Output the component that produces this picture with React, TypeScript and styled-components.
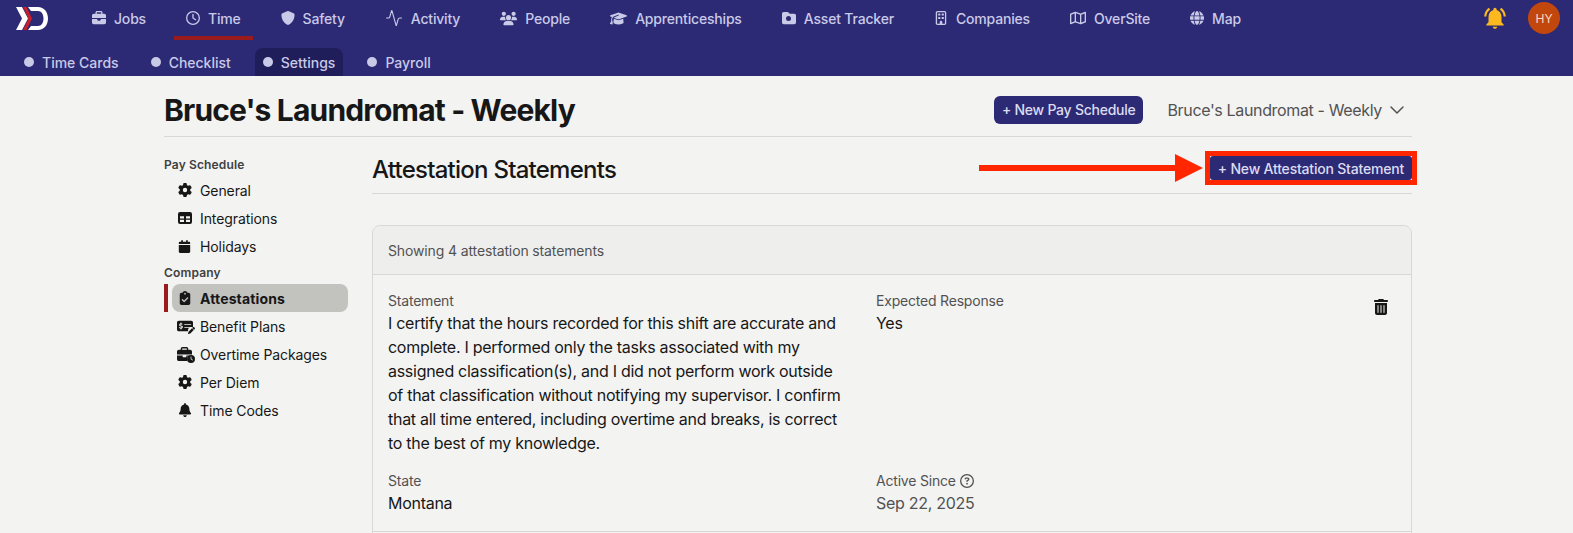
import React from "react";
import styled, { createGlobalStyle } from "styled-components";
import {
  FaBriefcase,
  FaClock,
  FaRegClock,
  FaShield,
  FaUsers,
  FaGraduationCap,
  FaFolder,
  FaRegBuilding,
  FaRegMap,
  FaGlobe,
  FaGear,
  FaCalendar,
  FaClipboardCheck,
  FaBell,
  FaTrashCan,
  FaMoneyCheckDollar,
  FaPen,
  FaRegCircleQuestion,
} from "react-icons/fa6";
import { MdNotificationsActive } from "react-icons/md";
import { Activity, ChevronDown } from "lucide-react";

const GlobalStyle = createGlobalStyle`
  html, body {
    margin: 0;
    height: 533px;
    overflow: hidden;
    background: #f3f3f2;
    font-family: Inter, "Liberation Sans", sans-serif;
    color: #171717;
  }
  * { box-sizing: border-box; }
`;

const navItems = [
  { label: "Jobs", icon: <FaBriefcase size={14} /> },
  { label: "Time", icon: <FaRegClock size={14} />, active: true },
  { label: "Safety", icon: <FaShield size={14} /> },
  { label: "Activity", icon: <Activity size={18} strokeWidth={1.5} /> },
  { label: "People", icon: <FaUsers size={17} /> },
  { label: "Apprenticeships", icon: <FaGraduationCap size={17} /> },
  { label: "Asset Tracker", icon: <FolderGear /> },
  { label: "Companies", icon: <FaRegBuilding size={14} /> },
  { label: "OverSite", icon: <FaRegMap size={16} /> },
  { label: "Map", icon: <FaGlobe size={14} /> },
];

const subTabs = ["Time Cards", "Checklist", "Settings", "Payroll"];

function FolderGear() {
  return (
    <IconStack>
      <FaFolder size={14} />
      <FolderDot />
    </IconStack>
  );
}

function TableIcon() {
  return (
    <svg width="14" height="12" viewBox="0 0 14 12">
      <path
        fillRule="evenodd"
        fill="currentColor"
        d="M2 0H12A2 2 0 0 1 14 2V10A2 2 0 0 1 12 12H2A2 2 0 0 1 0 10V2A2 2 0 0 1 2 0ZM2 4.2V6.4H6V4.2ZM8 4.2V6.4H12V4.2ZM2 7.7V10H6V7.7ZM8 7.7V10H12V7.7Z"
      />
    </svg>
  );
}

function BriefcaseClock() {
  return (
    <IconStack>
      <FaBriefcase size={15} />
      <IconBadge $right={-3} $bottom={-1}>
        <FaClock size={8} />
      </IconBadge>
    </IconStack>
  );
}

function CheckPen() {
  return (
    <IconStack>
      <FaMoneyCheckDollar size={16} />
      <IconBadge $right={-2} $bottom={0}>
        <FaPen size={7} />
      </IconBadge>
    </IconStack>
  );
}

const Logo = () => (
  <LogoSvg viewBox="0 0 32 23" width="32" height="23">
    <path d="M12 0H22C28 0 32 5 32 11.5C32 18 28 23 22 23H12L15 19H22C25.5 19 27.5 15.5 27.5 11.5C27.5 7.5 25.5 4 22 4H15Z" fill="#fff" />
    <path d="M0 0H6L12 11.5L6 23H0L6 11.5Z" fill="#fff" />
    <path d="M7 0H10.5L16 11.5L10.5 23H7L12.5 11.5Z" fill="#c8202b" />
  </LogoSvg>
);

const App: React.FC = () => {
  return (
    <>
      <GlobalStyle />
      <TopBar>
        <MainRow>
          <Logo />
          <NavList>
            {navItems.map((item) => (
              <NavItem key={item.label} $active={item.active}>
                {item.icon}
                {item.label}
              </NavItem>
            ))}
          </NavList>
          <TopEnd>
            <BellIcon>
              <MdNotificationsActive size={26} />
            </BellIcon>
            <Avatar>HY</Avatar>
          </TopEnd>
        </MainRow>
        <SubRow>
          {subTabs.map((tab) => (
            <SubTab key={tab} $active={tab === "Settings"}>
              <Dot />
              {tab}
            </SubTab>
          ))}
        </SubRow>
      </TopBar>
      <Content>
        <PageHeader>
          <PageTitle>Bruce's Laundromat - Weekly</PageTitle>
          <HeaderEnd>
            <PrimaryButton>+ New Pay Schedule</PrimaryButton>
            <ScheduleSelect>
              Bruce's Laundromat - Weekly
              <ChevronDown size={24} strokeWidth={1.5} />
            </ScheduleSelect>
          </HeaderEnd>
        </PageHeader>
        <Columns>
          <Sidebar>
            <SideLabel>Pay Schedule</SideLabel>
            <SideItem><SideIcon><FaGear size={14} /></SideIcon>General</SideItem>
            <SideItem><SideIcon><TableIcon /></SideIcon>Integrations</SideItem>
            <SideItem><SideIcon><FaCalendar size={13} /></SideIcon>Holidays</SideItem>
            <SideLabel>Company</SideLabel>
            <SideItem $active><SideIcon><FaClipboardCheck size={14} /></SideIcon>Attestations</SideItem>
            <SideItem><SideIcon><CheckPen /></SideIcon>Benefit Plans</SideItem>
            <SideItem><SideIcon><BriefcaseClock /></SideIcon>Overtime Packages</SideItem>
            <SideItem><SideIcon><FaGear size={14} /></SideIcon>Per Diem</SideItem>
            <SideItem><SideIcon><FaBell size={14} /></SideIcon>Time Codes</SideItem>
          </Sidebar>
          <Main>
            <SectionHeader>
              <SectionTitle>Attestation Statements</SectionTitle>
              <Arrow viewBox="0 0 224 28" width="224" height="28">
                <rect x="0" y="11" width="198" height="6" fill="#ff2600" />
                <polygon points="196,0 224,14 196,28" fill="#ff2600" />
              </Arrow>
              <Highlight>
                <SmallButton>+ New Attestation Statement</SmallButton>
              </Highlight>
            </SectionHeader>
            <Card>
              <CardHeader>Showing 4 attestation statements</CardHeader>
              <Statement>
                <Field>
                  <FieldLabel>Statement</FieldLabel>
                  <FieldValue>
                    I certify that the hours recorded for this shift are accurate and complete. I performed only the tasks associated with my assigned classification(s), and I did not perform work outside of that classification without notifying my supervisor. I confirm that all time entered, including overtime and breaks, is correct to the best of my knowledge.
                  </FieldValue>
                </Field>
                <Field>
                  <FieldLabel>Expected Response</FieldLabel>
                  <FieldValue>Yes</FieldValue>
                </Field>
                <DeleteIcon>
                  <FaTrashCan size={16} />
                </DeleteIcon>
                <Field>
                  <FieldLabel>State</FieldLabel>
                  <FieldValue>Montana</FieldValue>
                </Field>
                <Field>
                  <FieldLabel>
                    Active Since <FaRegCircleQuestion size={14} />
                  </FieldLabel>
                  <FieldValue $muted>Sep 22, 2025</FieldValue>
                </Field>
              </Statement>
            </Card>
          </Main>
        </Columns>
      </Content>
    </>
  );
};

const TopBar = styled.header`
  background: #2d2a75;
  height: 76px;
  color: #c9c9e8;
`;
const MainRow = styled.div`
  display: flex;
  align-items: flex-start;
  height: 40px;
  padding-left: 16px;
  padding-right: 13px;
`;
const LogoSvg = styled.svg`
  margin-top: 7px;
  flex-shrink: 0;
`;
const NavList = styled.nav`
  display: flex;
  gap: 16px;
  margin-left: 32px;
`;
const NavItem = styled.div<{ $active?: boolean }>`
  display: flex;
  align-items: center;
  gap: 8px;
  height: 40px;
  padding: 0 12px;
  font-size: 14px;
  font-weight: 500;
  letter-spacing: -0.18px;
  color: #c9c9e8;
  border-bottom: 4px solid ${(p) => (p.$active ? "#991b1b" : "transparent")};
`;
const TopEnd = styled.div`
  display: flex;
  align-items: center;
  gap: 20px;
  margin-left: auto;
  height: 36px;
`;
const BellIcon = styled.div`
  display: flex;
  color: #fbb91f;
`;
const Avatar = styled.div`
  width: 32px;
  height: 32px;
  border-radius: 50%;
  background: #c2470c;
  color: #f6d8c6;
  font-size: 12px;
  display: flex;
  align-items: center;
  justify-content: center;
`;
const SubRow = styled.div`
  display: flex;
  gap: 16px;
  margin-top: 8px;
  padding-left: 16px;
`;
const SubTab = styled.div<{ $active?: boolean }>`
  display: flex;
  align-items: center;
  gap: 8px;
  height: 28px;
  padding: 0 8px;
  font-size: 14px;
  font-weight: 500;
  border-radius: 8px 8px 0 0;
  background: ${(p) => (p.$active ? "#201e5a" : "transparent")};
`;
const Dot = styled.span`
  width: 10px;
  height: 10px;
  border-radius: 50%;
  background: #c9c9e8;
`;
const Content = styled.main`
  padding: 0 161px 0 164px;
`;
const PageHeader = styled.div`
  display: flex;
  align-items: center;
  justify-content: space-between;
  height: 61px;
  padding-top: 7px;
  border-bottom: 1px solid #d8d8d6;
`;
const PageTitle = styled.h1`
  margin: 0;
  font-size: 30px;
  line-height: 36px;
  font-weight: 700;
  letter-spacing: -0.83px;
  color: #171717;
`;
const HeaderEnd = styled.div`
  display: flex;
  align-items: center;
  gap: 24px;
  padding-right: 3px;
`;
const PrimaryButton = styled.button`
  background: #2d2a75;
  color: #dcdcf0;
  border: 0;
  border-radius: 6px;
  font-family: inherit;
  font-size: 14px;
  font-weight: 500;
  letter-spacing: -0.25px;
  height: 28px;
  padding: 0 8px;
`;
const SmallButton = styled(PrimaryButton)`
  display: block;
  height: 24px;
  border-radius: 3px;
  letter-spacing: -0.2px;
`;
const Highlight = styled.div`
  border: 5px solid #ff2600;
  margin-right: -5px;
`;
const ScheduleSelect = styled.div`
  display: flex;
  align-items: center;
  gap: 3px;
  font-size: 16px;
  letter-spacing: -0.35px;
  color: #525252;
`;
const Columns = styled.div`
  display: flex;
`;
const Sidebar = styled.aside`
  width: 208px;
  padding-top: 15px;
  flex-shrink: 0;
`;
const SideLabel = styled.div`
  font-size: 12px;
  line-height: 22px;
  padding-top: 2px;
  font-weight: 600;
  letter-spacing: 0.15px;
  color: #404040;
`;
const SideItem = styled.div<{ $active?: boolean }>`
  position: relative;
  display: flex;
  align-items: center;
  gap: 8px;
  height: 28px;
  width: 176px;
  margin-left: 8px;
  padding-left: 5px;
  font-size: 14px;
  font-weight: ${(p) => (p.$active ? 700 : 400)};
  letter-spacing: ${(p) => (p.$active ? "0.15px" : "-0.1px")};
  border-radius: 8px;
  background: ${(p) => (p.$active ? "#c2c2bf" : "transparent")};
  &::before {
    content: "";
    display: ${(p) => (p.$active ? "block" : "none")};
    position: absolute;
    left: -8px;
    top: 0;
    bottom: 0;
    width: 4px;
    background: #991b1b;
  }
`;
const SideIcon = styled.span`
  width: 15px;
  display: flex;
  justify-content: center;
  color: #171717;
`;
const IconStack = styled.span`
  position: relative;
  display: inline-flex;
`;
const FolderDot = styled.span`
  position: absolute;
  left: 4.5px;
  top: 5px;
  width: 5px;
  height: 5px;
  border-radius: 50%;
  background: #2d2a75;
`;
const IconBadge = styled.span<{ $right: number; $bottom: number }>`
  position: absolute;
  right: ${(p) => p.$right}px;
  bottom: ${(p) => p.$bottom}px;
  display: flex;
  background: #f3f3f2;
  border-radius: 50%;
`;
const Main = styled.section`
  flex: 1;
  min-width: 0;
`;
const SectionHeader = styled.div`
  position: relative;
  display: flex;
  align-items: flex-start;
  justify-content: space-between;
  height: 43px;
  margin-top: 14px;
  border-bottom: 1px solid #d8d8d6;
`;
const SectionTitle = styled.h2`
  margin: 0;
  font-size: 24px;
  font-weight: 500;
  line-height: 38px;
  letter-spacing: -0.75px;
  color: #171717;
`;
const Arrow = styled.svg`
  position: absolute;
  left: 607px;
  top: 3px;
`;
const Card = styled.div`
  margin-top: 31px;
  border: 1px solid #d8d8d6;
  border-radius: 8px;
  min-height: 400px;
`;
const CardHeader = styled.div`
  height: 49px;
  display: flex;
  align-items: center;
  padding: 0 15px;
  font-size: 14px;
  letter-spacing: -0.13px;
  color: #525252;
  background: #eeeeed;
  border-bottom: 1px solid #d8d8d6;
  border-radius: 8px 8px 0 0;
`;
const Statement = styled.div`
  display: grid;
  grid-template-columns: 488px 1fr 30px;
  row-gap: 16px;
  padding: 16px 15px;
  border-bottom: 1px solid #d8d8d6;
`;
const Field = styled.div`
  padding-right: 28px;
`;
const FieldLabel = styled.div`
  display: flex;
  align-items: center;
  gap: 4px;
  font-size: 14px;
  line-height: 20px;
  letter-spacing: -0.2px;
  color: #525252;
`;
const FieldValue = styled.div<{ $muted?: boolean }>`
  font-size: 16px;
  line-height: 24px;
  letter-spacing: -0.28px;
  color: ${(p) => (p.$muted ? "#525252" : "#171717")};
`;
const DeleteIcon = styled.div`
  grid-row: 1;
  grid-column: 3;
  display: flex;
  justify-content: center;
  padding-top: 8px;
  color: #171717;
`;

export default App;
